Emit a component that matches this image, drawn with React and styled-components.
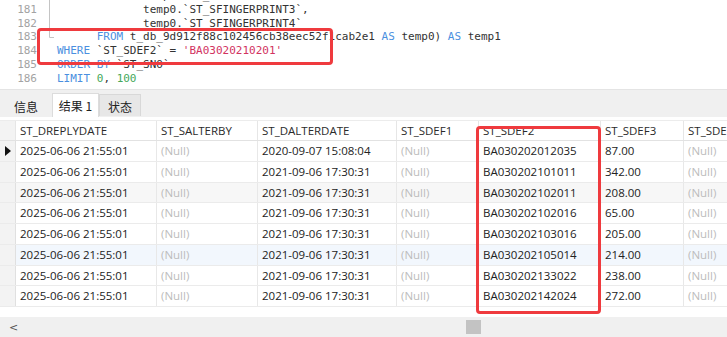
import React from 'react';
import styled, { createGlobalStyle } from 'styled-components';

const Global = createGlobalStyle`
  html, body { margin: 0; padding: 0; background: #f0f0f0; }
  body { width: 727px; height: 337px; overflow: hidden; font-family: "Open Sans", "Noto Sans CJK SC", sans-serif; }
`;

const Screen = styled.div`
  position: relative;
  width: 727px;
  height: 337px;
  overflow: hidden;
  display: flex;
  flex-direction: column;
  background: #f0f0f0;
`;

/* ---------- editor ---------- */
const Editor = styled.div`
  flex: none;
  height: 90px;
  background: #fff;
  overflow: hidden;
  border-bottom: 1px solid #e4e4e4;
  box-sizing: border-box;
`;

const Lines = styled.div`
  margin-top: -11px;
  display: flex;
  flex-direction: column;
`;

const Line = styled.div`
  display: grid;
  grid-template-columns: 37px 20px 1fr;
  height: 13.8px;
  line-height: 13.8px;
  font-family: "DejaVu Sans Mono", "Liberation Mono", monospace;
  font-size: 11px;
  color: #333;
`;

const LineNo = styled.span`
  text-align: right;
  color: #a3a3a3;
`;

const FoldCell = styled.span`
  display: block;
  height: 13.8px;
`;

const Code = styled.span`
  white-space: pre;
`;

const Kw = styled.span` color: #4b8fe0; `;
const Str = styled.span` color: #d2335f; `;
const Num = styled.span` color: #45a85a; `;

function Fold({ kind }) {
  if (kind === 'none') return <FoldCell />;
  return (
    <FoldCell>
      <svg width="20" height="14" viewBox="0 0 20 14">
        {kind === 'line' && <line x1="12.5" y1="0" x2="12.5" y2="14" stroke="#c4c4c4" strokeWidth="1" />}
        {kind === 'end' && (
          <path d="M12.5 0 V7.5 H17" fill="none" stroke="#c4c4c4" strokeWidth="1" />
        )}
      </svg>
    </FoldCell>
  );
}

/* ---------- tabs ---------- */
const TabBar = styled.div`
  flex: none;
  height: 27px;
  display: flex;
  align-items: flex-end;
  padding-left: 6px;
  box-sizing: border-box;
  background: #f0f0f0;
`;

const Tab = styled.div`
  box-sizing: border-box;
  width: ${p => p.$w}px;
  margin-left: ${p => p.$ml || 0}px;
  height: ${p => (p.$active ? 24 : 22)}px;
  margin-bottom: ${p => (p.$active ? 0 : 1)}px;
  display: flex;
  align-items: center;
  justify-content: center;
  font-family: "Noto Sans CJK SC", "Open Sans", sans-serif;
  font-size: 12px;
  color: #222;
  background: ${p => (p.$active ? '#fff' : p.$boxed ? '#e7e7e7' : 'transparent')};
  border: 1px solid ${p => (p.$active ? '#dcdcdc' : p.$boxed ? '#d8d8d8' : 'transparent')};
  border-bottom: none;
  padding-top: ${p => (p.$active ? 0 : 2)}px;
`;

/* ---------- grid ---------- */
const GridArea = styled.div`
  flex: 1;
  background: #fff;
  padding-top: 3px;
  display: flex;
  flex-direction: column;
  overflow: hidden;
`;

const COLS = '16px 141px 101px 139px 82px 122px 83px 140px';

const HeaderRow = styled.div`
  display: grid;
  grid-template-columns: ${COLS};
  height: 21px;
  box-sizing: border-box;
  border-bottom: 1px solid #e2e2e2;
  border-top: 1px solid #ececec;
`;

const HeadCell = styled.div`
  box-sizing: border-box;
  padding-left: 4px;
  font-size: 11.5px;
  line-height: 19px;
  color: #2a2a2a;
  white-space: nowrap;
  overflow: hidden;
  border-right: 1px solid #e6e6e6;
  background: ${p => (p.$ind ? '#f3f3f3' : '#fff')};
`;

const Row = styled.div`
  display: grid;
  grid-template-columns: ${COLS};
  height: 20.75px;
  box-sizing: border-box;
  border-bottom: 1px solid #ebebeb;
  background: ${p => p.$bg || '#fff'};
`;

const Cell = styled.div`
  box-sizing: border-box;
  padding-left: 4px;
  font-size: 11.5px;
  line-height: 19.5px;
  white-space: nowrap;
  overflow: hidden;
  color: ${p => (p.$null ? '#bcbcbc' : '#222')};
  border-right: 1px solid #e8e8e8;
`;

const Indicator = styled.div`
  box-sizing: border-box;
  background: #f3f3f3;
  border-right: 1px solid #e0e0e0;
  display: flex;
  align-items: center;
  padding-left: 5px;
`;

const Spacer = styled.div` flex: 1; `;

const HScroll = styled.div`
  flex: none;
  height: 20px;
  background: #f0f0f0;
  display: flex;
  align-items: center;
  padding-left: 9px;
  box-sizing: border-box;
`;

const Arrow = styled.span`
  font-family: "DejaVu Sans", sans-serif;
  font-size: 11px;
  color: #555;
  width: 8px;
`;

const Thumb = styled.div`
  width: 15px;
  height: 14px;
  background: #c3c3c3;
  margin-left: ${p => p.$offset}px;
`;

/* ---------- overlays ---------- */
const RedBox = styled.div`
  position: absolute;
  box-sizing: border-box;
  border: 3px solid #ef3a3e;
  border-radius: 4px;
  pointer-events: none;
`;

const rows = [
  ['2020-09-07 15:08:04', 'BA030202012035', '87.00'],
  ['2021-09-06 17:30:31', 'BA030202101011', '342.00'],
  ['2021-09-06 17:30:31', 'BA030202102011', '208.00'],
  ['2021-09-06 17:30:31', 'BA030202102016', '65.00'],
  ['2021-09-06 17:30:31', 'BA030202103016', '205.00'],
  ['2021-09-06 17:30:31', 'BA030202105014', '214.00'],
  ['2021-09-06 17:30:31', 'BA030202133022', '238.00'],
  ['2021-09-06 17:30:31', 'BA030202142024', '272.00'],
];

const rowBg = { 2: '#f7f7f7', 5: '#f2f7fd' };

const headers = ['ST_DREPLYDATE', 'ST_SALTERBY', 'ST_DALTERDATE', 'ST_SDEF1', 'ST_SDEF2', 'ST_SDEF3', 'ST_SDEF4'];

export default function App() {
  return (
    <>
      <Global />
      <Screen>
        <Editor>
          <Lines>
            <Line><LineNo>180</LineNo><Fold kind="line" /><Code>{'             temp0.`ST_SFINGERPRINT2`,'}</Code></Line>
            <Line><LineNo>181</LineNo><Fold kind="line" /><Code>{'             temp0.`ST_SFINGERPRINT3`,'}</Code></Line>
            <Line><LineNo>182</LineNo><Fold kind="line" /><Code>{'             temp0.`ST_SFINGERPRINT4`'}</Code></Line>
            <Line><LineNo>183</LineNo><Fold kind="end" /><Code>{'      '}<Kw>FROM</Kw>{' t_db_9d912f88c102456cb38eec52f1cab2e1 '}<Kw>AS</Kw>{' temp0) '}<Kw>AS</Kw>{' temp1'}</Code></Line>
            <Line><LineNo>184</LineNo><Fold kind="none" /><Code><Kw>WHERE</Kw>{' `ST_SDEF2` = '}<Str>'BA03020210201'</Str></Code></Line>
            <Line><LineNo>185</LineNo><Fold kind="none" /><Code><Kw>ORDER BY</Kw>{' `ST_SNO`'}</Code></Line>
            <Line><LineNo>186</LineNo><Fold kind="none" /><Code><Kw>LIMIT</Kw>{' '}<Num>0</Num>{', '}<Num>100</Num></Code></Line>
          </Lines>
        </Editor>

        <TabBar>
          <Tab $w={40}>信息</Tab>
          <Tab $w={47} $ml={6} $active>结果 1</Tab>
          <Tab $w={42} $boxed>状态</Tab>
        </TabBar>

        <GridArea>
          <HeaderRow>
            <HeadCell $ind />
            {headers.map(h => <HeadCell key={h}>{h}</HeadCell>)}
          </HeaderRow>
          {rows.map((r, i) => (
            <Row key={i} $bg={rowBg[i]}>
              <Indicator>
                {i === 0 && (
                  <svg width="7" height="10" viewBox="0 0 7 10"><path d="M0 0 L6 5 L0 10 Z" fill="#111" /></svg>
                )}
              </Indicator>
              <Cell>2025-06-06 21:55:01</Cell>
              <Cell $null>(Null)</Cell>
              <Cell>{r[0]}</Cell>
              <Cell $null>(Null)</Cell>
              <Cell>{r[1]}</Cell>
              <Cell>{r[2]}</Cell>
              <Cell $null>(Null)</Cell>
            </Row>
          ))}
          <Spacer />
        </GridArea>

        <HScroll>
          <Arrow>&lt;</Arrow>
          <Thumb $offset={449} />
        </HScroll>

        <RedBox style={{ left: 37, top: 28, width: 296, height: 37 }} />
        <RedBox style={{ left: 476, top: 126, width: 125, height: 188 }} />
      </Screen>
    </>
  );
}
